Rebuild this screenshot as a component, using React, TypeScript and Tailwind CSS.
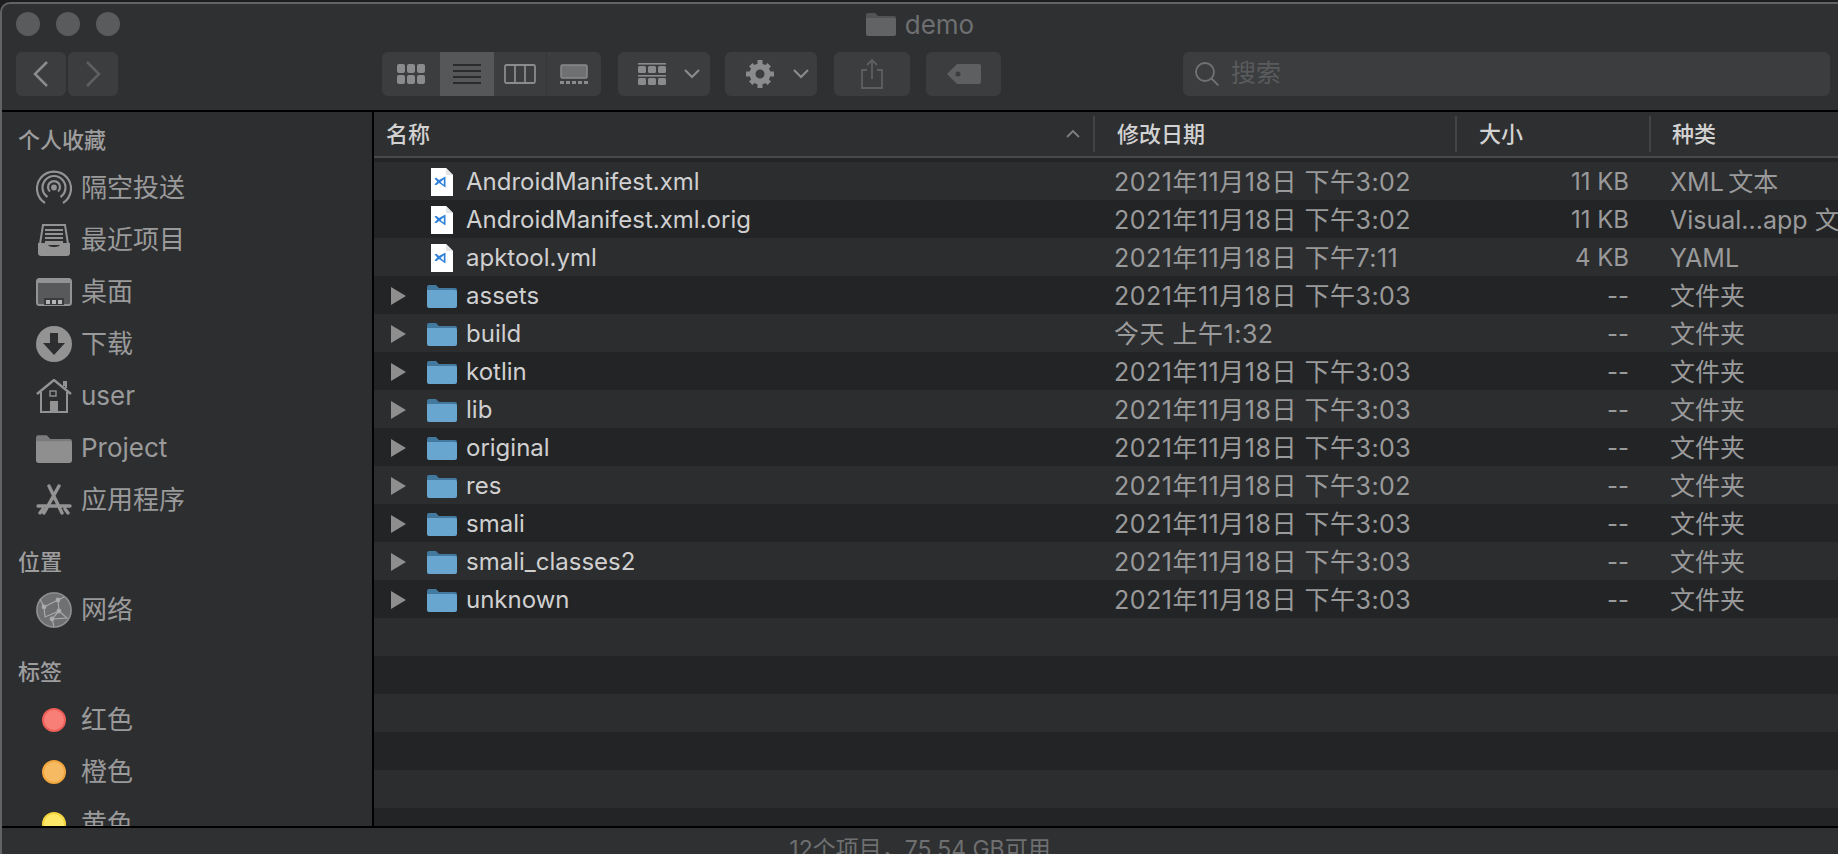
import type { ReactNode } from 'react';

const cjk = "font-['Inter','Noto_Sans_CJK_SC',sans-serif]";

const files = [
  { name: 'AndroidManifest.xml', date: '2021年11月18日 下午3:02', size: '11 KB', kind: 'XML\u2009文本', folder: false },
  { name: 'AndroidManifest.xml.orig', date: '2021年11月18日 下午3:02', size: '11 KB', kind: 'Visual...app 文稿', folder: false },
  { name: 'apktool.yml', date: '2021年11月18日 下午7:11', size: '4 KB', kind: 'YAML', folder: false },
  { name: 'assets', date: '2021年11月18日 下午3:03', size: '--', kind: '文件夹', folder: true },
  { name: 'build', date: '今天 上午1:32', size: '--', kind: '文件夹', folder: true },
  { name: 'kotlin', date: '2021年11月18日 下午3:03', size: '--', kind: '文件夹', folder: true },
  { name: 'lib', date: '2021年11月18日 下午3:03', size: '--', kind: '文件夹', folder: true },
  { name: 'original', date: '2021年11月18日 下午3:03', size: '--', kind: '文件夹', folder: true },
  { name: 'res', date: '2021年11月18日 下午3:02', size: '--', kind: '文件夹', folder: true },
  { name: 'smali', date: '2021年11月18日 下午3:03', size: '--', kind: '文件夹', folder: true },
  { name: 'smali_classes2', date: '2021年11月18日 下午3:03', size: '--', kind: '文件夹', folder: true },
  { name: 'unknown', date: '2021年11月18日 下午3:03', size: '--', kind: '文件夹', folder: true },
];

function ToolButton({ className, children }: { className: string; children: ReactNode }) {
  return (
    <div className={`flex h-[44px] shrink-0 items-center rounded-[6px] bg-[#3c3d3f] ${className}`}>
      {children}
    </div>
  );
}

function Chevron() {
  return (
    <svg width="16" height="10" viewBox="0 0 16 10" fill="none" stroke="#8a8b8c" strokeWidth="2.2">
      <path d="M1 1l7 7 7-7" />
    </svg>
  );
}

function FolderGlyph({ w, h, fill, tab }: { w: number; h: number; fill: string; tab: string }) {
  return (
    <svg width={w} height={h} viewBox="0 0 30 24">
      <path d="M0 3a2 2 0 0 1 2-2h7l3 3h16a2 2 0 0 1 2 2v4H0z" fill={tab} />
      <path d="M0 6h28a2 2 0 0 1 2 2v14a2 2 0 0 1-2 2H2a2 2 0 0 1-2-2z" fill={fill} />
    </svg>
  );
}

function DocIcon() {
  return (
    <svg width="22" height="28" viewBox="0 0 22 28">
      <path d="M0 0h15l7 7v21H0z" fill="#ffffff" />
      <path d="M15 0l7 7h-7z" fill="#e4e5e7" />
      <path d="M14.500 8.500v11l-6.500-4.500-2.800 2.300-1.700-.9 2.800-2.900-2.800-2.900 1.700-.9 2.800 2.300z" fill="#2f80d8" />
      <path d="M12.800 11.300v5.400l-3.300-2.700z" fill="#ffffff" />
    </svg>
  );
}

function SidebarIcon({ name }: { name: string }) {
  const c = '#939394';
  switch (name) {
    case 'airdrop':
      return (
        <svg width="36" height="36" viewBox="0 0 36 36" fill="none" stroke={c} strokeWidth="2.2">
          <path d="M9 33a17 17 0 1 1 18 0" />
          <path d="M11.500 27a11.500 11.500 0 1 1 13 0" />
          <path d="M14 21.500a6 6 0 1 1 8 0" />
          <circle cx="18" cy="17.500" r="1.800" fill={c} />
        </svg>
      );
    case 'recents':
      return (
        <svg width="32" height="32" viewBox="0 0 32 32">
          <path d="M5 1h22l3 19H2z" fill="none" stroke={c} strokeWidth="2" />
          <path d="M7 6h18M7 10h18M7 14h18M7 18h18" stroke={c} strokeWidth="1.800" />
          <path d="M0 19h9c1 3 3 4 7 4s6-1 7-4h9v10a3 3 0 0 1-3 3H3a3 3 0 0 1-3-3z" fill={c} />
        </svg>
      );
    case 'desktop':
      return (
        <svg width="36" height="28" viewBox="0 0 36 28">
          <rect x="1" y="1" width="34" height="26" rx="2.500" fill="#58595a" stroke={c} strokeWidth="2" />
          <rect x="1" y="1" width="34" height="4" rx="2" fill={c} />
          <rect x="8" y="20" width="20" height="7" fill="#3a3b3c" />
          <path d="M10 22h4v4h-4zM16 22h4v4h-4zM22 22h4v4h-4z" fill="#b5b5b5" />
        </svg>
      );
    case 'downloads':
      return (
        <svg width="36" height="36" viewBox="0 0 36 36">
          <circle cx="18" cy="18" r="18" fill={c} />
          <path d="M14 7h8v10h7L18 29 7 17h7z" fill="#2d2e30" />
        </svg>
      );
    case 'home':
      return (
        <svg width="36" height="34" viewBox="0 0 36 34" fill="none" stroke={c} strokeWidth="2">
          <path d="M1 15L18 1l17 14" strokeWidth="2.400" />
          <path d="M28 7V3h2v6" />
          <path d="M5 13v20h26V13" />
          <rect x="14" y="12" width="6" height="5" strokeWidth="1.400" />
          <rect x="14" y="22" width="8" height="11" fill={c} stroke="none" />
        </svg>
      );
    case 'folder':
      return <FolderGlyph w={36} h={29} fill="#8f8f90" tab="#7b7b7c" />;
    case 'apps':
      return (
        <svg width="36" height="32" viewBox="0 0 36 32" fill="none" stroke={c} strokeWidth="3.400" strokeLinecap="round">
          <path d="M13 2l13 27M23 2L8 29M2 22h32M4 29l3-4M32 29l-3-4" />
        </svg>
      );
    default:
      return (
        <svg width="36" height="36" viewBox="0 0 36 36" fill="none" stroke="#a8a8a8" strokeWidth="1.200">
          <circle cx="18" cy="18" r="18" fill="#6f7071" stroke="none" />
          <circle cx="18" cy="18" r="17" stroke={c} />
          <path d="M8 15l14-7 1 11-14 6zM23 19l8 7-15 1zM8 15L4 7M22 8l6-3M16 27l2 8" />
          <circle cx="22" cy="8" r="1.800" fill="#b0b0b0" />
          <circle cx="23" cy="19" r="1.800" fill="#b0b0b0" />
          <circle cx="8" cy="15" r="1.800" fill="#b0b0b0" />
          <circle cx="16" cy="27" r="1.800" fill="#b0b0b0" />
        </svg>
      );
  }
}

function SidebarItem({ label, icon, dot }: { label: string; icon?: string; dot?: string }) {
  return (
    <div className="flex h-[52px] items-center pl-[34px]">
      <div className="flex w-[36px] justify-center">
        {icon ? <SidebarIcon name={icon} /> : <div className={`size-[24px] rounded-full border-2 ${dot}`} />}
      </div>
      <span className="ml-[9px] text-[26px] leading-none text-[#9a9a9b]">{label}</span>
    </div>
  );
}

function SectionTitle({ label }: { label: string }) {
  return (
    <div className="flex h-[58px] items-end pb-[8px] pl-[16px] text-[22px] leading-[28px] font-medium text-[#9d9d9e]">
      {label}
    </div>
  );
}

function Sidebar() {
  return (
    <aside className="h-full w-[372px] shrink-0 overflow-hidden border-r-2 border-black bg-[#2d2e30]">
      <div className="flex h-[50px] items-end pb-[8px] pl-[16px] text-[22px] leading-[28px] font-medium text-[#9d9d9e]">个人收藏</div>
      <SidebarItem icon="airdrop" label="隔空投送" />
      <SidebarItem icon="recents" label="最近项目" />
      <SidebarItem icon="desktop" label="桌面" />
      <SidebarItem icon="downloads" label="下载" />
      <SidebarItem icon="home" label="user" />
      <SidebarItem icon="folder" label="Project" />
      <SidebarItem icon="apps" label="应用程序" />
      <SectionTitle label="位置" />
      <SidebarItem icon="network" label="网络" />
      <SectionTitle label="标签" />
      <SidebarItem dot="bg-[#f77f78] border-[#ee5f58]" label="红色" />
      <SidebarItem dot="bg-[#f6ba62] border-[#f2a73d]" label="橙色" />
      <SidebarItem dot="bg-[#fde868] border-[#f5d53e]" label="黄色" />
    </aside>
  );
}

function HeaderCell({ className, label }: { className: string; label: string }) {
  return (
    <div className={`flex h-[36px] items-center border-l-2 border-[#434446] text-[22px] font-medium text-[#d2d2d2] ${className}`}>
      {label}
    </div>
  );
}

function FileRow({ file, odd }: { file: (typeof files)[number]; odd: boolean }) {
  return (
    <div className={`flex h-[38px] shrink-0 items-center whitespace-nowrap pt-[2px] text-[24px] leading-none ${odd ? 'bg-[#232426]' : 'bg-[#2c2d2f]'}`}>
      <div className="flex w-[740px] shrink-0 items-center pl-[17px]">
        <div className="w-[15px]">
          {file.folder && (
            <svg width="15" height="18" viewBox="0 0 15 18">
              <path d="M0 0l15 9-15 9z" fill="#8e8e8f" />
            </svg>
          )}
        </div>
        <div className="ml-[21px] flex w-[30px] justify-center">
          {file.folder ? <FolderGlyph w={30} h={24} fill="#68a6cf" tab="#44799f" /> : <DocIcon />}
        </div>
        <span className="ml-[9px] text-[#d0d0d1]">{file.name}</span>
      </div>
      <div className="w-[381px] shrink-0 text-[25px] tracking-[0.5px] text-[#9a9a9b]">{file.date}</div>
      <div className="w-[134px] shrink-0 text-right text-[#9a9a9b]">{file.size}</div>
      <div className="pl-[41px] text-[25px] text-[#9a9a9b]">{file.kind}</div>
    </div>
  );
}

export default function App() {
  return (
    <div className={`h-[854px] w-[1838px] overflow-hidden bg-[#1d1d1f] pt-[2px] ${cjk}`}>
      <div className="flex h-[852px] flex-col overflow-hidden rounded-tl-[10px] border-t-2 border-l-2 border-[#626365] bg-[#2f3032]">
        {/* toolbar */}
        <header className="h-[108px] shrink-0 border-b-2 border-black">
          <div className="grid h-[46px] grid-cols-[1fr_auto_1fr] items-center pb-[6px]">
            <div className="flex gap-[16px] pl-[14px]">
              <div className="size-[24px] rounded-full bg-[#5a5b5d]" />
              <div className="size-[24px] rounded-full bg-[#5a5b5d]" />
              <div className="size-[24px] rounded-full bg-[#5a5b5d]" />
            </div>
            <div className="flex items-center gap-[9px] text-[26px] text-[#6e6f70]">
              <FolderGlyph w={30} h={24} fill="#626365" tab="#525355" />
              demo
            </div>
          </div>
          <div className="mt-[2px] flex pl-[14px] pr-[8px]">
            <ToolButton className="w-[50px] justify-center">
              <svg width="16" height="26" viewBox="0 0 16 26" fill="none" stroke="#8a8b8c" strokeWidth="2.500">
                <path d="M14 1L2 13l12 12" />
              </svg>
            </ToolButton>
            <ToolButton className="ml-[2px] w-[50px] justify-center">
              <svg width="16" height="26" viewBox="0 0 16 26" fill="none" stroke="#5e5f61" strokeWidth="2.500">
                <path d="M2 1l12 12L2 25" />
              </svg>
            </ToolButton>
            <div className="ml-[264px] flex h-[44px] w-[219px] shrink-0 overflow-hidden rounded-[6px] bg-[#3c3d3f]">
              <div className="flex w-[58px] items-center justify-center">
                <svg width="28" height="20" viewBox="0 0 28 20" fill="#8a8b8c">
                  <rect width="8" height="9" rx="2" />
                  <rect x="10" width="8" height="9" rx="2" />
                  <rect x="20" width="8" height="9" rx="2" />
                  <rect y="11" width="8" height="9" rx="2" />
                  <rect x="10" y="11" width="8" height="9" rx="2" />
                  <rect x="20" y="11" width="8" height="9" rx="2" />
                </svg>
              </div>
              <div className="flex w-[54px] items-center justify-center bg-[#565759]">
                <svg width="28" height="20" viewBox="0 0 28 20" stroke="#2a2b2d" strokeWidth="2">
                  <path d="M0 1h28M0 7h28M0 13h28M0 19h28" />
                </svg>
              </div>
              <div className="flex w-[53px] items-center justify-center border-r border-[#353638]">
                <svg width="32" height="20" viewBox="0 0 32 20" fill="none" stroke="#8a8b8c" strokeWidth="1.800">
                  <rect x="1" y="1" width="30" height="18" rx="1.500" />
                  <path d="M11 1v18M21 1v18" />
                </svg>
              </div>
              <div className="flex flex-1 items-center justify-center">
                <svg width="28" height="20" viewBox="0 0 28 20" fill="#8a8b8c">
                  <rect x="1" y="1" width="26" height="13" rx="1.500" fill="#6f7072" stroke="#8a8b8c" strokeWidth="1.500" />
                  <path d="M0 17h4v3H0zM6 17h4v3H6zM12 17h4v3h-4zM18 17h4v3h-4zM24 17h4v3h-4z" />
                </svg>
              </div>
            </div>
            <ToolButton className="ml-[17px] w-[92px] gap-[18px] pl-[20px]">
              <svg width="28" height="22" viewBox="0 0 28 22" fill="#8a8b8c">
                <rect width="28" height="1.600" />
                <rect y="3" width="8" height="7" rx="1.500" />
                <rect x="10" y="3" width="8" height="7" rx="1.500" />
                <rect x="20" y="3" width="8" height="7" rx="1.500" />
                <rect y="12" width="28" height="1.600" />
                <rect y="15" width="8" height="7" rx="1.500" />
                <rect x="10" y="15" width="8" height="7" rx="1.500" />
                <rect x="20" y="15" width="8" height="7" rx="1.500" />
              </svg>
              <Chevron />
            </ToolButton>
            <ToolButton className="ml-[15px] w-[92px] gap-[19px] pl-[21px]">
              <svg width="28" height="28" viewBox="0 0 28 28">
                <circle cx="14" cy="14" r="7.500" fill="none" stroke="#8a8b8c" strokeWidth="6" />
                <path d="M11.500 0h5v5h-5zM11.500 23h5v5h-5zM0 11.500h5v5H0zM23 11.500h5v5h-5zM3 6.500L6.500 3l3.500 3.500L6.500 10zM18 21.500l3.500-3.500 3.500 3.500-3.500 3.500zM21.500 3L25 6.500 21.500 10 18 6.500zM6.500 18l3.500 3.500L6.500 25 3 21.500z" fill="#8a8b8c" />
              </svg>
              <Chevron />
            </ToolButton>
            <ToolButton className="ml-[17px] w-[76px] justify-center">
              <svg width="22" height="30" viewBox="0 0 22 30" fill="none" stroke="#5e5f61" strokeWidth="1.800">
                <path d="M6 11H1v18h20V11h-5M11 20V1M6 6l5-5 5 5" />
              </svg>
            </ToolButton>
            <ToolButton className="ml-[16px] w-[75px] justify-center">
              <svg width="34" height="20" viewBox="0 0 34 20">
                <path d="M10 0h22a2 2 0 0 1 2 2v16a2 2 0 0 1-2 2H10L0 10z" fill="#5e5f61" />
                <circle cx="11" cy="10" r="2.500" fill="#3c3d3f" />
              </svg>
            </ToolButton>
            <div className="ml-[182px] flex h-[44px] flex-1 items-center rounded-[6px] bg-[#3c3d3f] pl-[12px]">
              <svg width="24" height="24" viewBox="0 0 24 24" fill="none" stroke="#717274" strokeWidth="1.800">
                <circle cx="10" cy="10" r="9" />
                <path d="M16.500 16.500L23.500 23.500" />
              </svg>
              <span className="ml-[12px] text-[25px] text-[#5a5b5d]">搜索</span>
            </div>
          </div>
        </header>

        <div className="flex h-[714px] shrink-0 overflow-hidden">
          <Sidebar />
          <main className="min-w-0 flex-1 overflow-hidden bg-[#232426]">
            {/* column headers */}
            <div className="flex h-[46px] items-center border-b-2 border-[#48494b] bg-[#2e2f31]">
              <div className="relative flex h-[36px] w-[719px] shrink-0 items-center pl-[12px] text-[22px] font-medium text-[#d2d2d2]">
                名称
                <svg className="absolute right-[13px] top-[13px]" width="14" height="9" viewBox="0 0 14 9" fill="none" stroke="#808082" strokeWidth="1.800">
                  <path d="M1 8l6-6 6 6" />
                </svg>
              </div>
              <HeaderCell className="w-[362px] pl-[22px]" label="修改日期" />
              <HeaderCell className="w-[194px] pl-[22px]" label="大小" />
              <HeaderCell className="flex-1 pl-[21px]" label="种类" />
            </div>
            <div className="flex h-[668px] flex-col overflow-hidden pt-[4px]">
              {files.map((file, index) => (
                <FileRow key={file.name} file={file} odd={index % 2 === 1} />
              ))}
              {[12, 13, 14, 15, 16, 17].map((n) => (
                <div key={n} className={`h-[38px] shrink-0 ${n % 2 === 1 ? 'bg-[#232426]' : 'bg-[#2c2d2f]'}`} />
              ))}
            </div>
          </main>
        </div>

        {/* status bar, cut off by the bottom of the page */}
        <footer className="h-[28px] shrink-0 overflow-hidden border-t-2 border-black bg-[#2f3032] pt-[7px] text-center text-[23px] leading-[28px] text-[#6e6f70]">
          12个项目，75.54 GB可用
        </footer>
      </div>
    </div>
  );
}
